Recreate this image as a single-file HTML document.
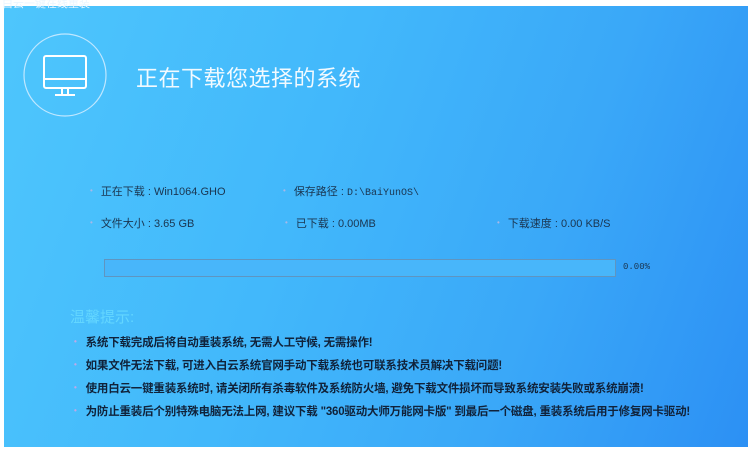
<!DOCTYPE html><html><head><meta charset="utf-8"><style>
body{margin:0;width:752px;height:454px;background:#fff;position:relative;overflow:hidden;font-family:"Liberation Sans","Noto Sans CJK SC",sans-serif}
#p{position:absolute;left:4px;top:6px;width:744px;height:441px;background:linear-gradient(110deg,#4ec6fc 0%,#42b8fb 40%,#3aa8f8 70%,#2c90f4 100%)}
.a{position:absolute;white-space:nowrap}
.i{font-size:11px;color:#1a3550}
.i:before{content:"•";color:#a8b8e8;font-size:8px;margin-right:8px;vertical-align:2px}
.t{font-size:11.5px;color:#10223a;font-weight:bold;letter-spacing:-0.2px}
.t:before{content:"•";color:#c0a8e8;font-size:8px;margin-right:9px;vertical-align:2px}
</style></head><body><div id="p"></div>
<div class="a" style="left:2px;top:-5px;font-size:11px;color:#eaf6ff">白云一键在线重装</div>
<div class="a" style="left:662px;top:-3px;font-size:11px;color:#fff;letter-spacing:8px">♥≡–×</div>
<svg class="a" style="left:22px;top:32px" width="88" height="88"><circle cx="43" cy="43" r="41" fill="none" stroke="#bfe7ff" stroke-width="1.2"/><rect x="22" y="24" width="42" height="32" rx="2" fill="none" stroke="#fff" stroke-width="2"/><line x1="22" y1="47" x2="64" y2="47" stroke="#fff" stroke-width="2"/><line x1="40" y1="56" x2="40" y2="62" stroke="#fff" stroke-width="2"/><line x1="46" y1="56" x2="46" y2="62" stroke="#fff" stroke-width="2"/><line x1="33" y1="63" x2="53" y2="63" stroke="#fff" stroke-width="2"/></svg>
<div class="a" style="left:136px;top:61px;font-size:22px;color:#f2faff;letter-spacing:0.5px">正在下载您选择的系统</div>
<div class="a i" style="left:90px;top:183px">正在下载 : Win1064.GHO</div>
<div class="a i" style="left:283px;top:183px">保存路径 : <span style="font-family:'Liberation Mono',monospace;font-size:10px">D:\BaiYunOS\</span></div>
<div class="a i" style="left:90px;top:215px">文件大小 : 3.65 GB</div>
<div class="a i" style="left:285px;top:215px">已下载 : 0.00MB</div>
<div class="a i" style="left:497px;top:215px">下载速度 : 0.00 KB/S</div>
<div class="a" style="left:104px;top:259px;width:510px;height:16px;border:1.5px solid #5f95c0;background:#48b6fa"></div>
<div class="a" style="left:623px;top:262px;font-size:9px;color:#1a3550;font-family:'Liberation Mono',monospace">0.00%</div>
<div class="a" style="left:70px;top:306px;font-size:15px;color:#63d6ff">温馨提示:</div>
<div class="a t" style="left:74px;top:334px">系统下载完成后将自动重装系统, 无需人工守候, 无需操作!</div>
<div class="a t" style="left:74px;top:357px">如果文件无法下载, 可进入白云系统官网手动下载系统也可联系技术员解决下载问题!</div>
<div class="a t" style="left:74px;top:380px">使用白云一键重装系统时, 请关闭所有杀毒软件及系统防火墙, 避免下载文件损坏而导致系统安装失败或系统崩溃!</div>
<div class="a t" style="left:74px;top:403px">为防止重装后个别特殊电脑无法上网, 建议下载 "360驱动大师万能网卡版" 到最后一个磁盘, 重装系统后用于修复网卡驱动!</div>
</body></html>
